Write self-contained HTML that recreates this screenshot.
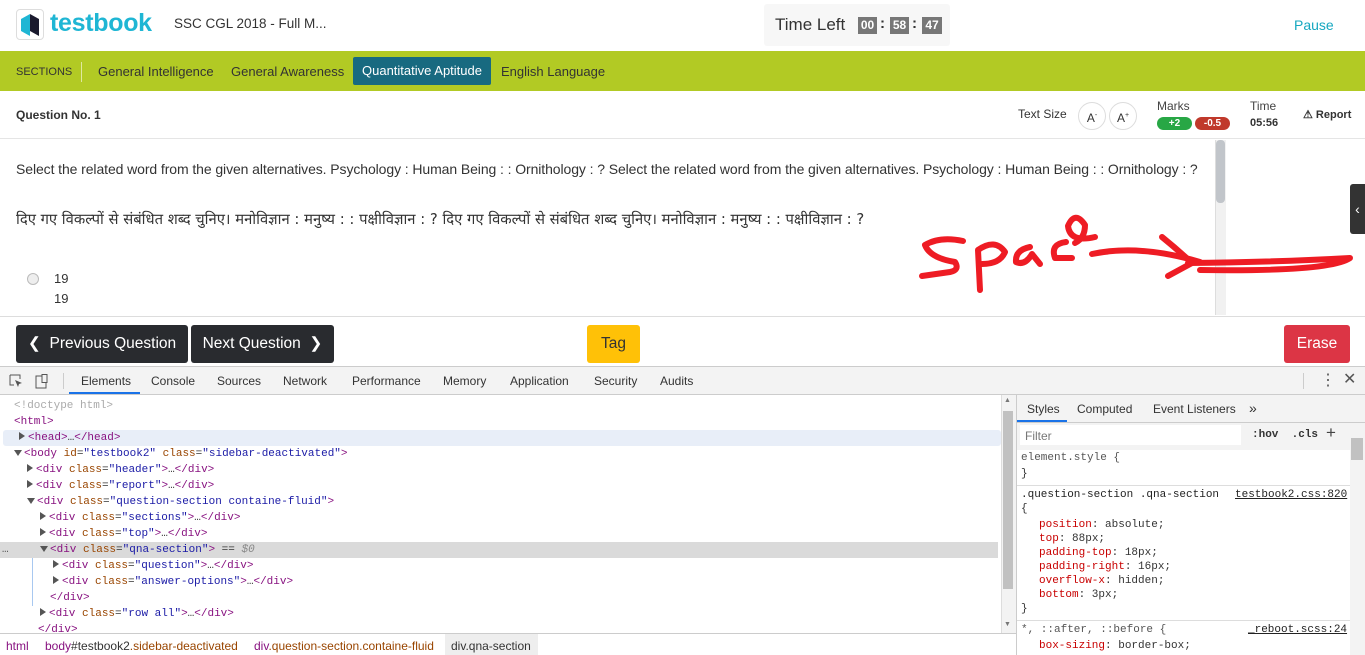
<!DOCTYPE html>
<html><head><meta charset="utf-8">
<style>
*{box-sizing:border-box;margin:0;padding:0}
body{width:1365px;height:655px;overflow:hidden;position:relative;font-family:"Liberation Sans",sans-serif;background:#fff;color:#333}
.a{position:absolute;white-space:nowrap}
.mono{font-family:"Liberation Mono",monospace;font-size:11px}
.tag{color:#881280}.at{color:#994500}.av{color:#1a1aa6}.cm{color:#888}
.row{position:absolute;left:0;height:16px;line-height:16px;width:998px}
.tri{display:inline-block;width:0;height:0;border-left:6px solid #555;border-top:4px solid transparent;border-bottom:4px solid transparent;margin-right:3px}
.trd{display:inline-block;width:0;height:0;border-top:6px solid #555;border-left:4px solid transparent;border-right:4px solid transparent;margin-right:2px}
.tb{position:absolute;top:367px;height:28px;line-height:28px;font-size:12px;color:#333}
.btn{position:absolute;top:325px;height:38px;line-height:38px;border-radius:3px;font-size:15.5px;color:#fff;text-align:center}
.prop{color:#c80000}
</style></head><body>
<!-- header -->
<div class="a" style="left:16px;top:9px;width:28px;height:31px;border:1px solid #ddd;border-radius:4px;background:#fff"></div>
<svg class="a" style="left:21px;top:14px" width="18" height="22" viewBox="0 0 18 22"><path d="M0 5 L9 0 L9 22 L0 17Z" fill="#1fb6d4"/><path d="M9 0 L18 5 L18 22 L9 17Z" fill="#1a1a2e"/></svg>
<div class="a" style="left:50px;top:9px;font-size:25px;font-weight:bold;color:#1fb6d4;letter-spacing:-0.3px">testbook</div>
<div class="a" style="left:174px;top:16px;font-size:13.5px;color:#333">SSC CGL 2018 - Full M...</div>
<div class="a" style="left:764px;top:4px;width:186px;height:42px;background:#f7f7f7;border-radius:3px"></div>
<div class="a" style="left:775px;top:15px;font-size:17px;color:#333">Time Left</div>
<div class="a" style="left:858px;top:17px;width:19px;height:17px;background:#777;color:#fff;font-size:12px;font-weight:bold;text-align:center;line-height:17px">00</div>
<div class="a" style="left:880px;top:15px;font-size:15px;font-weight:bold">:</div>
<div class="a" style="left:890px;top:17px;width:19px;height:17px;background:#777;color:#fff;font-size:12px;font-weight:bold;text-align:center;line-height:17px">58</div>
<div class="a" style="left:912px;top:15px;font-size:15px;font-weight:bold">:</div>
<div class="a" style="left:922px;top:17px;width:20px;height:17px;background:#777;color:#fff;font-size:12px;font-weight:bold;text-align:center;line-height:17px">47</div>
<div class="a" style="left:1294px;top:17px;font-size:14px;color:#17a8c0">Pause</div>
<!-- sections -->
<div class="a" style="left:0;top:51px;width:1365px;height:40px;background:#b2ca24"></div>
<div class="a" style="left:16px;top:66px;font-size:11px;color:#333">SECTIONS</div>
<div class="a" style="left:81px;top:62px;width:1px;height:20px;background:#e0e8a0"></div>
<div class="a" style="left:98px;top:64px;font-size:13px;color:#333">General Intelligence</div>
<div class="a" style="left:231px;top:64px;font-size:13px;color:#333">General Awareness</div>
<div class="a" style="left:353px;top:57px;width:138px;height:28px;background:#186a80;border-radius:2px;color:#fff;font-size:13px;line-height:28px;text-align:center">Quantitative Aptitude</div>
<div class="a" style="left:501px;top:64px;font-size:13px;color:#333">English Language</div>
<!-- question row -->
<div class="a" style="left:16px;top:108px;font-size:12px;font-weight:bold;color:#333">Question No. 1</div>
<div class="a" style="left:1018px;top:107px;font-size:12px;color:#333">Text Size</div>
<div class="a" style="left:1078px;top:102px;width:28px;height:28px;border:1px solid #ddd;border-radius:50%;font-size:12px;text-align:center;line-height:26px">A<sup style="font-size:7px">-</sup></div>
<div class="a" style="left:1109px;top:102px;width:28px;height:28px;border:1px solid #ddd;border-radius:50%;font-size:12px;text-align:center;line-height:26px">A<sup style="font-size:7px">+</sup></div>
<div class="a" style="left:1157px;top:99px;font-size:12px;color:#444">Marks</div>
<div class="a" style="left:1157px;top:117px;width:35px;height:13px;background:#28a745;border-radius:7px;color:#fff;font-size:10px;font-weight:bold;text-align:center;line-height:13px">+2</div>
<div class="a" style="left:1195px;top:117px;width:35px;height:13px;background:#c0392b;border-radius:7px;color:#fff;font-size:10px;font-weight:bold;text-align:center;line-height:13px">-0.5</div>
<div class="a" style="left:1250px;top:99px;font-size:12px;color:#444">Time</div>
<div class="a" style="left:1250px;top:117px;font-size:11px;font-weight:bold;color:#333">05:56</div>
<div class="a" style="left:1303px;top:108px;font-size:11px;font-weight:bold;color:#333">&#9888; Report</div>
<div class="a" style="left:0;top:138px;width:1365px;height:1px;background:#e5e5e5"></div>
<!-- question -->
<div class="a" style="left:16px;top:161px;font-size:14px;color:#333;letter-spacing:-0.09px">Select the related word from the given alternatives. Psychology : Human Being : : Ornithology : ? Select the related word from the given alternatives. Psychology : Human Being : : Ornithology : ?</div>
<div class="a" style="left:16px;top:209px;font-size:14.8px;color:#333;font-family:'DejaVu Sans','Liberation Sans',sans-serif">दिए गए विकल्पों से संबंधित शब्द चुनिए। मनोविज्ञान : मनुष्य : : पक्षीविज्ञान : ? दिए गए विकल्पों से संबंधित शब्द चुनिए। मनोविज्ञान : मनुष्य : : पक्षीविज्ञान : ?</div>
<div class="a" style="left:27px;top:273px;width:12px;height:12px;border:1px solid #bbb;border-radius:50%;background:#eee"></div>
<div class="a" style="left:54px;top:271px;font-size:13px">19</div>
<div class="a" style="left:54px;top:291px;font-size:13px">19</div>
<div class="a" style="left:1215px;top:140px;width:11px;height:175px;background:#f1f1f1;border-left:1px solid #ddd"></div>
<div class="a" style="left:1216px;top:140px;width:9px;height:63px;background:#c1c5ca;border-radius:4px"></div>
<div class="a" style="left:1350px;top:184px;width:15px;height:50px;background:#333;border-radius:3px 0 0 3px;color:#fff;font-size:14px;line-height:50px;text-align:center">&#8249;</div>
<svg class="a" style="left:910px;top:200px" width="450" height="100" viewBox="910 200 450 100"><g fill="none" stroke="#ee1c24" stroke-width="6" stroke-linecap="round" stroke-linejoin="round">
<path d="M963 241 Q940 236 925 245 Q930 258 955 262 Q960 270 950 272 L922 276"/>
<path d="M980 290 L978 250 Q995 238 1005 252 Q1000 264 982 264"/>
<path d="M1030 247 Q1015 250 1016 262 Q1025 266 1032 254 L1040 264"/>
<path d="M1066 242 Q1050 244 1055 258 L1072 258"/>
<path d="M1075 243 Q1085 238 1085 225 Q1075 210 1068 226 Q1070 243 1095 237"/>
<path d="M1092 254 Q1140 244 1200 262"/>
<path d="M1162 237 Q1178 250 1192 263 L1168 276"/>
<path d="M1188 263 Q1280 262 1350 258 Q1330 272 1200 270"/>
</g></svg>
<!-- bottom bar -->
<div class="a" style="left:0;top:316px;width:1365px;height:1px;background:#ddd"></div>
<div class="btn" style="left:16px;width:172px;background:#292b2f">&#10094;&nbsp; Previous Question</div>
<div class="btn" style="left:191px;width:143px;background:#292b2f">Next Question &nbsp;&#10095;</div>
<div class="btn" style="left:587px;width:53px;background:#ffc107;color:#333">Tag</div>
<div class="btn" style="left:1284px;width:66px;background:#dc3545">Erase</div>
<!-- devtools -->
<div class="a" style="left:0;top:366px;width:1365px;height:1px;background:#ccc"></div>
<div class="a" style="left:0;top:367px;width:1365px;height:28px;background:#f3f3f3;border-bottom:1px solid #ccc"></div>
<svg class="a" style="left:9px;top:374px" width="40" height="16" viewBox="0 0 40 16"><path d="M1 1h10v4M1 1v10h4" fill="none" stroke="#555"/><path d="M6 6l7 3-3 1-1 3z" fill="#555"/><rect x="27" y="2" width="10" height="12" fill="none" stroke="#555"/><rect x="33" y="0.5" width="5" height="8" fill="#f3f3f3" stroke="#555"/></svg>
<div class="a" style="left:63px;top:373px;width:1px;height:16px;background:#ccc"></div>
<div class="tb" style="left:81px">Elements</div>
<div class="a" style="left:69px;top:392px;width:71px;height:2px;background:#1a73e8"></div>
<div class="tb" style="left:151px">Console</div>
<div class="tb" style="left:217px">Sources</div>
<div class="tb" style="left:283px">Network</div>
<div class="tb" style="left:352px">Performance</div>
<div class="tb" style="left:443px">Memory</div>
<div class="tb" style="left:510px">Application</div>
<div class="tb" style="left:594px">Security</div>
<div class="tb" style="left:660px">Audits</div>
<div class="a" style="left:1303px;top:373px;width:1px;height:16px;background:#ccc"></div>
<div class="a" style="left:1320px;top:370px;font-size:16px;color:#555">&#8942;</div>
<div class="a" style="left:1343px;top:369px;font-size:16px;color:#555">&#10005;</div>
<!-- elements tree -->
<div class="mono">
<div class="row" style="top:398px;padding-left:14px;color:#aaa">&lt;!doctype html&gt;</div>
<div class="row" style="top:414px;padding-left:14px"><span class="tag">&lt;html&gt;</span></div>
<div class="row" style="top:430px;padding-left:16px;background:#e8eef8;left:3px;border-radius:3px"><span class="tri"></span><span class="tag">&lt;head&gt;</span>…<span class="tag">&lt;/head&gt;</span></div>
<div class="row" style="top:446px;padding-left:14px"><span class="trd"></span><span class="tag">&lt;body </span><span class="at">id</span>=<span class="av">"testbook2"</span> <span class="at">class</span>=<span class="av">"sidebar-deactivated"</span><span class="tag">&gt;</span></div>
<div class="row" style="top:462px;padding-left:27px"><span class="tri"></span><span class="tag">&lt;div </span><span class="at">class</span>=<span class="av">"header"</span><span class="tag">&gt;</span>…<span class="tag">&lt;/div&gt;</span></div>
<div class="row" style="top:478px;padding-left:27px"><span class="tri"></span><span class="tag">&lt;div </span><span class="at">class</span>=<span class="av">"report"</span><span class="tag">&gt;</span>…<span class="tag">&lt;/div&gt;</span></div>
<div class="row" style="top:494px;padding-left:27px"><span class="trd"></span><span class="tag">&lt;div </span><span class="at">class</span>=<span class="av">"question-section containe-fluid"</span><span class="tag">&gt;</span></div>
<div class="row" style="top:510px;padding-left:40px"><span class="tri"></span><span class="tag">&lt;div </span><span class="at">class</span>=<span class="av">"sections"</span><span class="tag">&gt;</span>…<span class="tag">&lt;/div&gt;</span></div>
<div class="row" style="top:526px;padding-left:40px"><span class="tri"></span><span class="tag">&lt;div </span><span class="at">class</span>=<span class="av">"top"</span><span class="tag">&gt;</span>…<span class="tag">&lt;/div&gt;</span></div>
<div class="row" style="top:542px;padding-left:40px;background:#dadada"><span class="a" style="left:2px;color:#555">…</span><span class="trd"></span><span class="tag">&lt;div </span><span class="at">class</span>=<span class="av">"qna-section"</span><span class="tag">&gt;</span> == <i style="color:#888">$0</i></div>
<div class="row" style="top:558px;padding-left:53px"><span class="tri"></span><span class="tag">&lt;div </span><span class="at">class</span>=<span class="av">"question"</span><span class="tag">&gt;</span>…<span class="tag">&lt;/div&gt;</span></div>
<div class="row" style="top:574px;padding-left:53px"><span class="tri"></span><span class="tag">&lt;div </span><span class="at">class</span>=<span class="av">"answer-options"</span><span class="tag">&gt;</span>…<span class="tag">&lt;/div&gt;</span></div>
<div class="row" style="top:590px;padding-left:50px"><span class="tag">&lt;/div&gt;</span></div>
<div class="a" style="left:32px;top:558px;width:1px;height:48px;background:#a8c8f0"></div>
<div class="row" style="top:606px;padding-left:40px"><span class="tri"></span><span class="tag">&lt;div </span><span class="at">class</span>=<span class="av">"row all"</span><span class="tag">&gt;</span>…<span class="tag">&lt;/div&gt;</span></div>
<div class="row" style="top:622px;padding-left:38px"><span class="tag">&lt;/div&gt;</span></div>
</div>
<div class="a" style="left:1001px;top:395px;width:15px;height:238px;background:#f3f3f3;border-left:1px solid #ddd"></div>
<div class="a" style="left:1003px;top:411px;width:10px;height:178px;background:#c1c1c1"></div>
<div class="a" style="left:1004px;top:397px;font-size:7px;color:#777">&#9650;</div>
<div class="a" style="left:1004px;top:621px;font-size:7px;color:#777">&#9660;</div>
<!-- breadcrumb -->
<div class="a" style="left:0;top:633px;width:1016px;height:22px;background:#fff;border-top:1px solid #ccc"></div>
<div class="a" style="left:6px;top:639px;font-size:12px;color:#881280">html</div>
<div class="a" style="left:45px;top:639px;font-size:12px;color:#881280">body<span style="color:#333">#testbook2</span><span style="color:#994500">.sidebar-deactivated</span></div>
<div class="a" style="left:254px;top:639px;font-size:12px;color:#881280">div<span style="color:#994500">.question-section.containe-fluid</span></div>
<div class="a" style="left:445px;top:634px;width:93px;height:21px;background:#eee"></div>
<div class="a" style="left:451px;top:639px;font-size:12px;color:#333">div.qna-section</div>
<!-- styles pane -->
<div class="a" style="left:1016px;top:395px;width:349px;height:260px;background:#fff;border-left:1px solid #ccc"></div>
<div class="a" style="left:1017px;top:395px;width:348px;height:28px;background:#f3f3f3;border-bottom:1px solid #ccc"></div>
<div class="tb" style="left:1027px;top:395px">Styles</div>
<div class="a" style="left:1017px;top:420px;width:50px;height:2px;background:#1a73e8"></div>
<div class="tb" style="left:1077px;top:395px">Computed</div>
<div class="tb" style="left:1153px;top:395px">Event Listeners</div>
<div class="tb" style="left:1249px;top:394px;font-size:14px">&#187;</div>
<div class="a" style="left:1017px;top:423px;width:333px;height:27px;background:#f3f3f3"></div>
<div class="a" style="left:1020px;top:425px;width:221px;height:20px;background:#fff"></div>
<div class="a" style="left:1025px;top:429px;font-size:12px;color:#777">Filter</div>
<div class="a mono" style="left:1252px;top:429px;color:#333;font-weight:bold">:hov&nbsp; .cls</div>
<div class="a" style="left:1326px;top:423px;font-size:17px;color:#444">+</div>
<div class="a" style="left:1350px;top:423px;width:15px;height:232px;background:#f3f3f3"></div>
<div class="a" style="left:1351px;top:438px;width:12px;height:22px;background:#c1c1c1"></div>
<div class="mono">
<div class="a" style="left:1021px;top:452px;color:#555">element.style {</div>
<div class="a" style="left:1021px;top:468px">}</div>
<div class="a" style="left:1017px;top:485px;width:333px;height:1px;background:#ddd"></div>
<div class="a" style="left:1021px;top:489px;color:#222">.question-section .qna-section</div>
<div class="a" style="left:1235px;top:489px;color:#222;text-decoration:underline">testbook2.css:820</div>
<div class="a" style="left:1021px;top:503px">{</div>
<div class="a" style="left:1039px;top:519px"><span class="prop">position</span>: absolute;</div>
<div class="a" style="left:1039px;top:533px"><span class="prop">top</span>: 88px;</div>
<div class="a" style="left:1039px;top:547px"><span class="prop">padding-top</span>: 18px;</div>
<div class="a" style="left:1039px;top:561px"><span class="prop">padding-right</span>: 16px;</div>
<div class="a" style="left:1039px;top:575px"><span class="prop">overflow-x</span>: hidden;</div>
<div class="a" style="left:1039px;top:589px"><span class="prop">bottom</span>: 3px;</div>
<div class="a" style="left:1021px;top:603px">}</div>
<div class="a" style="left:1017px;top:620px;width:333px;height:1px;background:#ddd"></div>
<div class="a" style="left:1021px;top:624px;color:#555">*, ::after, ::before {</div>
<div class="a" style="left:1248px;top:624px;color:#222;text-decoration:underline">_reboot.scss:24</div>
<div class="a" style="left:1039px;top:640px"><span class="prop">box-sizing</span>: border-box;</div>
</div>
</body></html>
